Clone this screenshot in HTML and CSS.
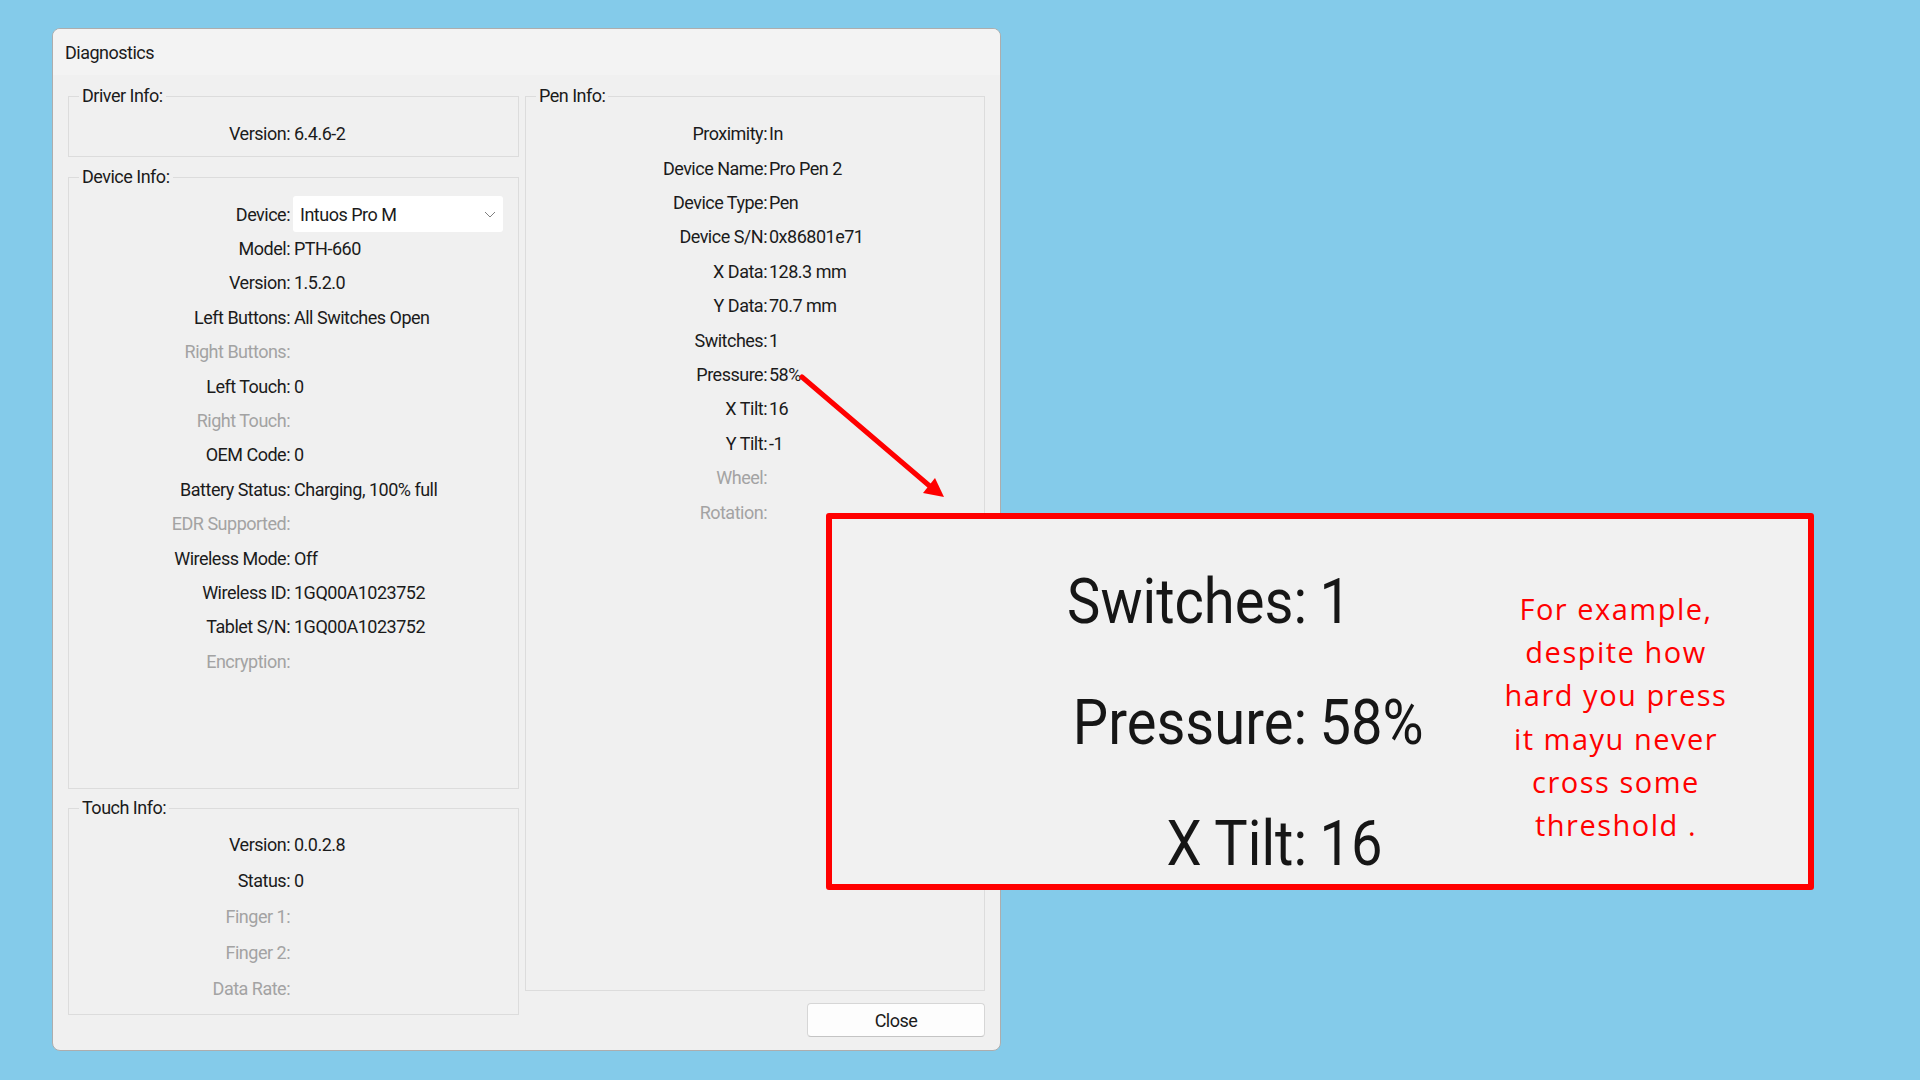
FILE: index.html
```html
<!DOCTYPE html>
<html lang="en">
<head>
<meta charset="utf-8">
<title>Diagnostics</title>
<link rel="stylesheet" href="styles.css">
</head>
<body>
<div class="window">
  <div class="titlebar">Diagnostics</div>
  <div class="content">
    <div class="col-left">
      <fieldset class="group g-driver">
        <legend>Driver Info:</legend>
        <div class="rows">
          <div class="row"><span class="lbl">Version:</span><span class="val">6.4.6-2</span></div>
        </div>
      </fieldset>
      <fieldset class="group g-device">
        <legend>Device Info:</legend>
        <div class="rows">
          <div class="row"><span class="lbl">Device:</span>
            <div class="combo"><span>Intuos Pro M</span>
              <svg class="chev" width="12" height="7" viewBox="0 0 12 7"><polyline points="1,1 6,6 11,1" fill="none" stroke="#808080" stroke-width="1"/></svg>
            </div>
          </div>
          <div class="row"><span class="lbl">Model:</span><span class="val">PTH-660</span></div>
          <div class="row"><span class="lbl">Version:</span><span class="val">1.5.2.0</span></div>
          <div class="row"><span class="lbl">Left Buttons:</span><span class="val">All Switches Open</span></div>
          <div class="row off"><span class="lbl">Right Buttons:</span></div>
          <div class="row"><span class="lbl">Left Touch:</span><span class="val">0</span></div>
          <div class="row off"><span class="lbl">Right Touch:</span></div>
          <div class="row"><span class="lbl">OEM Code:</span><span class="val">0</span></div>
          <div class="row"><span class="lbl">Battery Status:</span><span class="val">Charging, 100% full</span></div>
          <div class="row off"><span class="lbl">EDR Supported:</span></div>
          <div class="row"><span class="lbl">Wireless Mode:</span><span class="val">Off</span></div>
          <div class="row"><span class="lbl">Wireless ID:</span><span class="val">1GQ00A1023752</span></div>
          <div class="row"><span class="lbl">Tablet S/N:</span><span class="val">1GQ00A1023752</span></div>
          <div class="row off"><span class="lbl">Encryption:</span></div>
        </div>
      </fieldset>
      <fieldset class="group g-touch">
        <legend>Touch Info:</legend>
        <div class="rows">
          <div class="row"><span class="lbl">Version:</span><span class="val">0.0.2.8</span></div>
          <div class="row"><span class="lbl">Status:</span><span class="val">0</span></div>
          <div class="row off"><span class="lbl">Finger 1:</span></div>
          <div class="row off"><span class="lbl">Finger 2:</span></div>
          <div class="row off"><span class="lbl">Data Rate:</span></div>
        </div>
      </fieldset>
    </div>
    <div class="col-right">
      <fieldset class="group g-pen">
        <legend>Pen Info:</legend>
        <div class="rows">
          <div class="row"><span class="lbl">Proximity:</span><span class="val">In</span></div>
          <div class="row"><span class="lbl">Device Name:</span><span class="val">Pro Pen 2</span></div>
          <div class="row"><span class="lbl">Device Type:</span><span class="val">Pen</span></div>
          <div class="row"><span class="lbl">Device S/N:</span><span class="val">0x86801e71</span></div>
          <div class="row"><span class="lbl">X Data:</span><span class="val">128.3 mm</span></div>
          <div class="row"><span class="lbl">Y Data:</span><span class="val">70.7 mm</span></div>
          <div class="row"><span class="lbl">Switches:</span><span class="val">1</span></div>
          <div class="row"><span class="lbl">Pressure:</span><span class="val">58%</span></div>
          <div class="row"><span class="lbl">X Tilt:</span><span class="val">16</span></div>
          <div class="row"><span class="lbl">Y Tilt:</span><span class="val">-1</span></div>
          <div class="row off"><span class="lbl">Wheel:</span></div>
          <div class="row off"><span class="lbl">Rotation:</span></div>
        </div>
      </fieldset>
      <div class="btnrow"><div class="btn">Close</div></div>
    </div>
  </div>
</div>

<svg class="arrow" width="1920" height="1080" viewBox="0 0 1920 1080">
  <line x1="802" y1="377" x2="932" y2="488" stroke="#ff0000" stroke-width="5" stroke-linecap="round"/>
  <polygon points="944,497 935,478 923,493" fill="#ff0000"/>
</svg>

<div class="callout">
  <div class="zoom">
    <span class="zl">Switches:</span><span class="zv">1</span>
    <span class="zl">Pressure:</span><span class="zv">58%</span>
    <span class="zl">X Tilt:</span><span class="zv">16</span>
  </div>
  <div class="note">For example,<br>despite how<br>hard you press<br>it mayu never<br>cross some<br>threshold .</div>
</div>
</body>
</html>
```

FILE: styles.css
```css
* { box-sizing: border-box; }
html, body { margin: 0; padding: 0; }
body {
  width: 1920px;
  height: 1080px;
  background: #84cbea;
  font-family: Roboto, "Liberation Sans", sans-serif;
  position: relative;
  overflow: hidden;
}

.window {
  margin: 28px 0 0 52px;
  width: 949px;
  height: 1023px;
  background: #f0f0f0;
  border: 1px solid #adadad;
  border-radius: 8px;
  display: flex;
  flex-direction: column;
  overflow: hidden;
  color: #1b1b1b;
  font-size: 18px;
  letter-spacing: -0.5px;
}

.titlebar {
  flex: none;
  height: 46px;
  background: #f3f3f3;
  display: flex;
  align-items: center;
  padding-left: 12px;
}

.content {
  flex: 1;
  display: flex;
  gap: 6px;
  padding: 9px 15px 13px 15px;
}

.col-left {
  width: 451px;
  display: flex;
  flex-direction: column;
}
.col-right {
  width: 460px;
  display: flex;
  flex-direction: column;
}

.group {
  margin: 0;
  padding: 0;
  border: 1px solid #dcdcdc;
  min-width: 0;
}
.group legend {
  margin-left: 10px;
  padding: 0 3px;
  line-height: 24px;
}

.col-left .g-driver { height: 73px; }
.col-left .g-device { height: 624px; margin-top: 8px; }
.col-left .g-touch { height: 219px; margin-top: 7px; }
.col-right .g-pen { height: 907px; }

.rows { padding-top: 8px; }
.g-pen .rows { padding-top: 8.6px; }
.g-touch .rows { padding-top: 6px; }

.row {
  display: flex;
  align-items: center;
  height: 34.4px;
  white-space: nowrap;
}
.g-touch .row { height: 36px; }

.lbl {
  flex: none;
  width: 221px;
  text-align: right;
}
.val { margin-left: 4px; }
.g-pen .lbl { width: 241px; }
.g-pen .val { margin-left: 2px; }

.off { color: #a3a3a3; }

.combo {
  margin-left: 3px;
  width: 210px;
  height: 36px;
  background: #ffffff;
  border-radius: 3px;
  display: flex;
  align-items: center;
  justify-content: space-between;
  padding: 0 7px 0 7px;
}
.chev { flex: none; }

.btnrow {
  margin-top: 12px;
  display: flex;
  justify-content: flex-end;
}
.btn {
  width: 178px;
  height: 34px;
  background: #fdfdfd;
  border: 1px solid #d6d6d6;
  border-bottom-color: #c4c4c4;
  border-radius: 4px;
  display: flex;
  align-items: center;
  justify-content: center;
}

.arrow {
  position: absolute;
  left: 0;
  top: 0;
  pointer-events: none;
}

.callout {
  position: absolute;
  left: 826px;
  top: 513px;
  width: 988px;
  height: 377px;
  border: 6px solid #ff0000;
  border-radius: 3px;
  background: #f1f1f1;
  display: flex;
  align-items: flex-start;
}

.zoom {
  flex: none;
  margin-left: 175px;
  margin-top: 22px;
  display: grid;
  grid-template-columns: 300px auto;
  grid-auto-rows: 121px;
  column-gap: 14px;
  font-family: Roboto, "Liberation Sans", sans-serif;
  font-size: 63px;
  line-height: 121px;
  color: #161616;
  transform-origin: 300px 0;
  transform: scaleX(0.89);
  white-space: nowrap;
}
.zl { text-align: right; }

.note {
  margin-left: auto;
  margin-right: 32px;
  margin-top: 68px;
  width: 320px;
  text-align: center;
  font-family: "Open Sans", sans-serif;
  font-size: 29px;
  line-height: 43.2px;
  letter-spacing: 1.5px;
  color: #ff0000;
  white-space: nowrap;
}
```
